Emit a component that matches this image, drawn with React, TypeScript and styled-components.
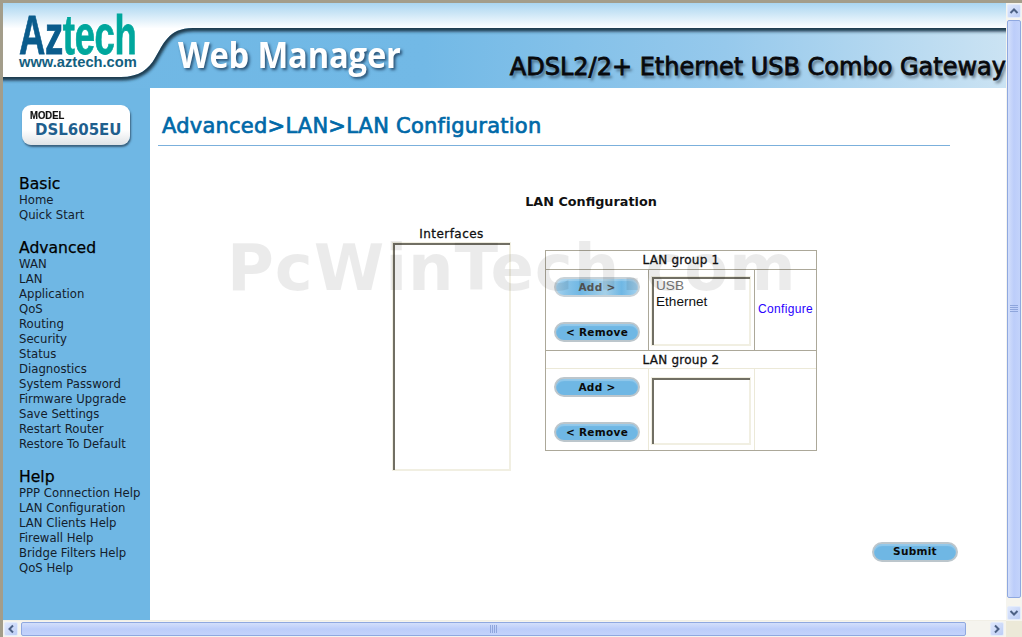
import React from "react";
import styled, { createGlobalStyle, css } from "styled-components";

const Global = createGlobalStyle`
  html, body { margin: 0; padding: 0; background: #fff; overflow: hidden; }
  * { box-sizing: border-box; }
`;

const SANS = `"DejaVu Sans", Verdana, sans-serif`;
const ARIAL = `"Liberation Sans", Arial, sans-serif`;
const BLUE = "#6fb7e4";

const Window = styled.div`
  width: 1022px; height: 637px; display: grid;
  grid-template-columns: 1fr 16px; grid-template-rows: 1fr 16px;
  background: #fff; border-top: 3px solid #a39d8a; border-left: 3px solid #a39d8a;
  overflow: hidden; position: relative; font-family: ${SANS};
`;
const Page = styled.div`display: flex; flex-direction: column; min-height: 0; min-width: 0; border-bottom: 1px solid #f1efe6;`;

const Banner = styled.header`position: relative; height: 85px; flex: none; overflow: hidden;`;
const BannerArt = styled.svg`position: absolute; inset: 0; width: 100%; height: 100%;`;
const BannerRow = styled.div`position: relative; display: flex; align-items: flex-start; height: 100%;`;
const Logo = styled.div`width: 175px; padding: 10px 0 0 16px; flex: none;`;
const LogoMark = styled.div`
  font: bold 56px/43px ${ARIAL}; letter-spacing: -.5px; transform: scaleX(.65); transform-origin: 0 0;
  white-space: nowrap; height: 43px; color: #00a79d; -webkit-text-stroke: .8px currentColor;
`;
const LogoAz = styled.span`color: #0b5c8c;`;
const LogoUrl = styled.div`font: bold 14.7px/15px ${ARIAL}; color: #14607f; margin-top: -1px; white-space: nowrap;`;
const Product = styled.div`
  font: bold 35px/40px "Open Sans", sans-serif; color: #fff; white-space: nowrap; letter-spacing: -.2px;
  margin-top: 32px; text-shadow: 2px 2px 3px rgba(20,50,80,.75);
  transform: scaleX(.935); transform-origin: 0 0;
`;
const Tagline = styled.div`
  position: absolute; right: 0; top: 48px; font: normal 24px/32px "DejaVu Sans", sans-serif;
  color: #08090c; white-space: nowrap; text-shadow: 2px 3px 3px rgba(20,30,40,.6);
  -webkit-text-stroke: .8px #08090c;
`;

const Body = styled.div`display: flex; flex: 1; min-height: 0;`;
const Sidebar = styled.nav`width: 147px; flex: none; background: ${BLUE}; padding: 17px 0 0 16px; color: #101820;`;
const Badge = styled.div`
  width: 108px; height: 40px; margin-left: 3px; border-radius: 9px; padding: 5px 0 0 8px;
  background: linear-gradient(#fff 0%, #fff 62%, #dfe3e6 100%);
  box-shadow: 1px 2px 2px rgba(30,50,70,.65);
`;
const BadgeLabel = styled.div`font: bold 10px/11px ${ARIAL}; color: #111; transform: scaleX(.95); transform-origin: 0 0; -webkit-text-stroke: .2px #111;`;
const BadgeModel = styled.div`font: bold 15px/19px ${SANS}; color: #1f5f8e; margin: 0 0 0 5px;`;
const NavGroup = styled.div<{ $gap: number }>`margin-top: ${p => p.$gap}px;`;
const NavTitle = styled.h3`font: 500 15.6px/18px ${SANS}; color: #000; margin: 0; padding-top: 1px; -webkit-text-stroke: .25px #000;`;
const NavLink = styled.div`font: 11.7px/15px ${SANS}; color: #14202c; white-space: nowrap;`;

const Main = styled.main`flex: 1; position: relative; padding: 22px 56px 0 8px; min-width: 0;`;
const Title = styled.h1`
  font: normal 21px/32px ${SANS}; color: #0069a8; margin: 0; padding: 0 0 3px 4px; height: 36px;
  border-bottom: 1px solid #7bb0dc; white-space: nowrap; letter-spacing: .23px; -webkit-text-stroke: .7px #0069a8;
`;
const Section = styled.h2`font: bold 12.8px/16px ${SANS}; color: #111; text-align: center; margin: 48px 0 0; width: 866px;`;
const Config = styled.div`display: flex; align-items: flex-start; margin: 16px 0 0 234px;`;
const IfaceCol = styled.div`width: 119px; flex: none;`;
const IfaceLabel = styled.div`font: normal 12px/16px ${SANS}; color: #111; text-align: center; letter-spacing: .45px; -webkit-text-stroke: .3px #111;`;

const ListBox = styled.div<{ $h: number }>`
  height: ${p => p.$h}px; background: #fff; border: 2px solid #f1efe2; position: relative;
  padding: 0 0 0 3px; font: 13.6px/16px ${ARIAL}; color: #111;
  &::before { content: ""; position: absolute; inset: -1px; border-top: 2px solid #716f64; border-left: 2px solid #716f64; pointer-events: none; }
`;
const Group = styled.div`
  width: 272px; margin: 24px 0 0 34px; flex: none; display: grid; grid-template-columns: 103px 106px 1fr;
  grid-template-rows: 19px 80px 1px 18px 81px;
  border: 1px solid #aca899;
`;
const GroupHead = styled.div<{ $soft?: boolean }>`
  grid-column: 1 / -1; text-align: center; font: normal 12px/18px ${SANS}; color: #111; letter-spacing: .25px;
  -webkit-text-stroke: .3px #111;
  border-bottom: 1px solid ${p => (p.$soft ? "#ece9d8" : "#aca899")};
`;
const Cell = styled.div<{ $soft?: boolean; $rule?: boolean }>`
  display: flex; flex-direction: column; position: relative; min-height: 0;
  ${p => p.$rule && css`border-right: 1px solid ${p.$soft ? "#ece9d8" : "#aca899"};`}
`;
const ButtonCell = styled(Cell)<{ $top: number }>`padding: ${p => p.$top}px 0 0 8px; gap: 25px;`;
const ListCell = styled(Cell)<{ $top: number }>`padding: ${p => p.$top}px 3px 0 2px;`;
const LinkCell = styled(Cell)`align-items: center; justify-content: center; padding-bottom: 2px;`;
const RowRule = styled.div`grid-column: 1 / -1; background: #aca899;`;

const Pill = styled.button<{ $disabled?: boolean }>`
  width: 86px; height: 20px; border-radius: 10px; padding: 0; flex: none;
  border: 2px solid #bcc6cc; background: ${BLUE};
  box-shadow: inset 0 2px 1px rgba(255,255,255,.25);
  font: bold 10.5px/15px ${SANS}; letter-spacing: .3px; color: #0b0b0b; white-space: nowrap;
  ${p => p.$disabled && css`
    color: #555; border-color: #c8d2d8;
    background: linear-gradient(90deg, #a5d2ee 0%, #8ac4e8 12%, ${BLUE} 30%, #a5d0e8 60%, ${BLUE} 80%, #a5d2ee 100%);
  `}
`;
const Faded = styled.div`color: #777;`;
const ConfigureLink = styled.a`font: 12px/15px ${ARIAL}; color: #2a00ff; letter-spacing: .35px; text-decoration: none;`;
const Actions = styled.div`position: absolute; left: 722px; top: 452px;`;
const Watermark = styled.div`
  position: absolute; left: 77px; top: 144px; font: bold 64px/72px ${SANS}; color: #000; opacity: .075;
  letter-spacing: .9px; white-space: nowrap; pointer-events: none;
`;

const Track = styled.div<{ $v?: boolean }>`
  background: #f5f4ee; display: flex; gap: 2px;
  flex-direction: ${p => (p.$v ? "column" : "row")};
  padding: ${p => (p.$v ? "1px" : "1px 2px 1px 1px")};
`;
const ArrowBtn = styled.div`
  width: 14px; height: 14px; flex: none; border: 1px solid #e4ecfb; border-radius: 2px;
  background: linear-gradient(135deg, #dfe8fd, #bccdf5); display: grid; place-items: center;
`;
const Thumb = styled.div<{ $v?: boolean }>`
  flex: none; border: 1px solid #8fa8e0; border-radius: 2px; display: grid; place-items: center;
  background: ${p => (p.$v ? "linear-gradient(90deg,#d3dffb,#bccdfa 50%,#c3d3fb)" : "linear-gradient(#d3dffb,#bccdfa 50%,#c3d3fb)")};
  ${p => (p.$v ? "width: 14px; height: 578px;" : "height: 14px; width: 945px; margin-left: 1px;")}
`;
const Spacer = styled.div`flex: 1;`;
const Corner = styled.div`background: #ece9d8;`;

const Chevron = ({ d }: { d: string }) => (
  <svg width="10" height="10" viewBox="0 0 10 10"><path d={d} fill="none" stroke="#4d6185" strokeWidth="2" /></svg>
);
const Grip = ({ v }: { v?: boolean }) => (
  <svg width="8" height="8" viewBox="0 0 8 8">
    {[0, 2, 4, 6].map(i =>
      v ? <rect key={i} x="0" y={i} width="8" height="1" fill="#8fa6dc" /> : <rect key={i} x={i} y="0" width="1" height="8" fill="#8fa6dc" />
    )}
  </svg>
);

const bandPath = "M1003 25 L190 25 C165 25 160 42 152 55 C146 66 136 74 118 74 L0 74 L0 85 L1003 85 Z";

const Art = () => (
  <BannerArt viewBox="0 0 1003 85" preserveAspectRatio="none">
    <defs>
      <linearGradient id="sky" x1="0" y1="0" x2="0" y2="1">
        <stop offset="0" stopColor="#a9d5f0" /><stop offset="1" stopColor="#fdfeff" />
      </linearGradient>
      <linearGradient id="blue" x1="0" y1="0" x2="1" y2="0">
        <stop offset="0" stopColor="#6fb7e4" /><stop offset=".42" stopColor="#72b9e6" />
        <stop offset=".72" stopColor="#96c9ec" /><stop offset="1" stopColor="#cbe3f3" />
      </linearGradient>
      <filter id="soft" x="-5%" y="-20%" width="110%" height="140%"><feGaussianBlur stdDeviation="1.6" /></filter>
      <clipPath id="bandClip"><path d={bandPath} /></clipPath>
    </defs>
    <rect width="1003" height="25" fill="url(#sky)" />
    <path d="M0 25 L190 25 C165 25 160 42 152 55 C146 66 136 74 118 74 L0 74 Z" fill="#fff" />
    <path d={bandPath} fill="url(#blue)" />
    <g clipPath="url(#bandClip)">
      <path d="M1010 25 L190 25 C165 25 160 42 152 55 C146 66 136 74 118 74 L-5 74" fill="none" stroke="#1f3a4e" strokeWidth="7" filter="url(#soft)" />
    </g>
  </BannerArt>
);

const basic = ["Home", "Quick Start"];
const advanced = ["WAN", "LAN", "Application", "QoS", "Routing", "Security", "Status", "Diagnostics", "System Password", "Firmware Upgrade", "Save Settings", "Restart Router", "Restore To Default"];
const help = ["PPP Connection Help", "LAN Configuration", "LAN Clients Help", "Firewall Help", "Bridge Filters Help", "QoS Help"];

export default function App() {
  return (
    <Window>
      <Global />
      <Page>
        <Banner>
          <Art />
          <BannerRow>
            <Logo>
              <LogoMark><LogoAz>Az</LogoAz>tech</LogoMark>
              <LogoUrl>www.aztech.com</LogoUrl>
            </Logo>
            <Product>Web Manager</Product>
            <Tagline>ADSL2/2+ Ethernet USB Combo Gateway</Tagline>
          </BannerRow>
        </Banner>
        <Body>
          <Sidebar>
            <Badge>
              <BadgeLabel>MODEL</BadgeLabel>
              <BadgeModel>DSL605EU</BadgeModel>
            </Badge>
            <NavGroup $gap={29}>
              <NavTitle>Basic</NavTitle>
              {basic.map(t => <NavLink key={t}>{t}</NavLink>)}
            </NavGroup>
            <NavGroup $gap={15}>
              <NavTitle>Advanced</NavTitle>
              {advanced.map(t => <NavLink key={t}>{t}</NavLink>)}
            </NavGroup>
            <NavGroup $gap={15}>
              <NavTitle>Help</NavTitle>
              {help.map(t => <NavLink key={t}>{t}</NavLink>)}
            </NavGroup>
          </Sidebar>
          <Main>
            <Title>Advanced&gt;LAN&gt;LAN Configuration</Title>
            <Section>LAN Configuration</Section>
            <Config>
              <IfaceCol>
                <IfaceLabel>Interfaces</IfaceLabel>
                <ListBox $h={229} />
              </IfaceCol>
              <Group>
                <GroupHead>LAN group 1</GroupHead>
                <ButtonCell $rule $top={7}>
                  <Pill $disabled>Add &gt;</Pill>
                  <Pill>&lt; Remove</Pill>
                </ButtonCell>
                <ListCell $rule $top={6}>
                  <ListBox $h={70}>
                    <Faded>USB</Faded>
                    <div>Ethernet</div>
                  </ListBox>
                </ListCell>
                <LinkCell><ConfigureLink href="#">Configure</ConfigureLink></LinkCell>
                <RowRule />
                <GroupHead $soft>LAN group 2</GroupHead>
                <ButtonCell $rule $soft $top={8}>
                  <Pill>Add &gt;</Pill>
                  <Pill>&lt; Remove</Pill>
                </ButtonCell>
                <ListCell $rule $soft $top={8}>
                  <ListBox $h={68} />
                </ListCell>
                <LinkCell />
              </Group>
            </Config>
            <Actions><Pill>Submit</Pill></Actions>
            <Watermark>PcWinTech.com</Watermark>
          </Main>
        </Body>
      </Page>
      <Track $v>
        <ArrowBtn><Chevron d="M1.5 7 L5 3.5 L8.5 7" /></ArrowBtn>
        <Thumb $v><Grip v /></Thumb>
        <Spacer />
        <ArrowBtn><Chevron d="M1.5 3 L5 6.5 L8.5 3" /></ArrowBtn>
      </Track>
      <Track>
        <ArrowBtn><Chevron d="M7 1.5 L3.5 5 L7 8.5" /></ArrowBtn>
        <Thumb><Grip /></Thumb>
        <Spacer />
        <ArrowBtn><Chevron d="M3 1.5 L6.5 5 L3 8.5" /></ArrowBtn>
      </Track>
      <Corner />
    </Window>
  );
}
